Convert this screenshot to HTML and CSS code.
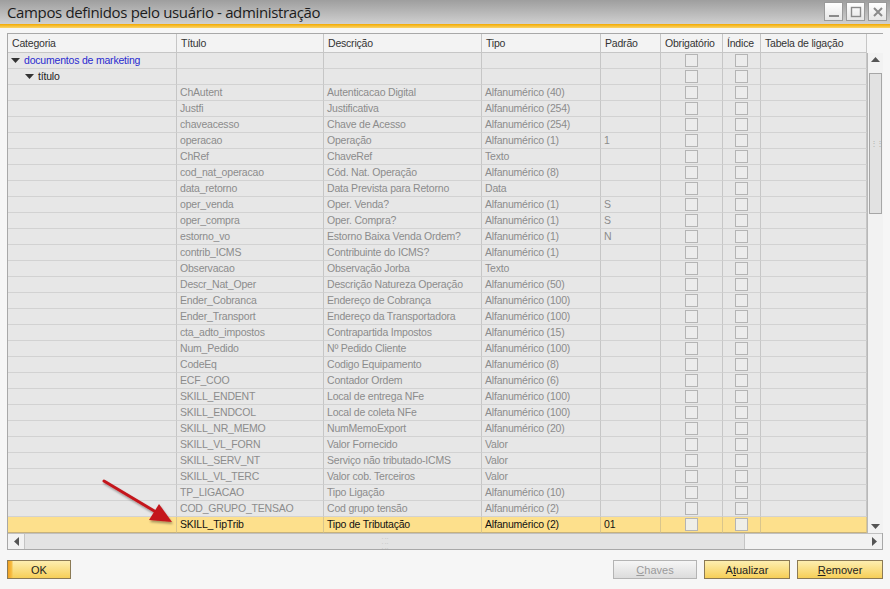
FILE: index.html
```html
<!DOCTYPE html>
<html lang="pt">
<head>
<meta charset="utf-8">
<title>Campos definidos pelo usuário - administração</title>
<link rel="stylesheet" href="styles.css">
</head>
<body>
<div class="window">
  <div class="titlebar">
    <span class="title">Campos definidos pelo usuário - administração</span>
    <div class="winbtns">
      <span class="wb"><svg width="12" height="12" viewBox="0 0 12 12"><rect x="1" y="9" width="10" height="2" fill="#8a8a8a"/></svg></span>
      <span class="wb"><svg width="12" height="12" viewBox="0 0 12 12"><rect x="1.5" y="1.5" width="9" height="9" fill="none" stroke="#8a8a8a" stroke-width="1.4"/></svg></span>
      <span class="wb"><svg width="12" height="12" viewBox="0 0 12 12"><path d="M2 2 L10 10 M10 2 L2 10" stroke="#8a8a8a" stroke-width="2"/></svg></span>
    </div>
  </div>
  <div class="accent"></div>

  <div class="content">
    <div class="panel">
      <div class="main">
        <div class="grid">
          <div class="row head">
            <div class="c">Categoria</div><div class="c">Título</div><div class="c">Descrição</div><div class="c">Tipo</div><div class="c">Padrão</div><div class="c">Obrigatório</div><div class="c">Índice</div><div class="c">Tabela de ligação</div>
          </div>
          <div class="row cat">
            <div class="c l1"><svg class="tri" width="9" height="5" viewBox="0 0 9 5"><path d="M0 0 L9 0 L4.5 5Z" fill="#333"/></svg><span class="blue">documentos de marketing</span></div><div class="c"></div><div class="c"></div><div class="c"></div><div class="c"></div><div class="c cb"><i></i></div><div class="c cb"><i></i></div><div class="c"></div>
          </div>
          <div class="row cat">
            <div class="c l2"><svg class="tri" width="9" height="5" viewBox="0 0 9 5"><path d="M0 0 L9 0 L4.5 5Z" fill="#333"/></svg><span>título</span></div><div class="c"></div><div class="c"></div><div class="c"></div><div class="c"></div><div class="c cb"><i></i></div><div class="c cb"><i></i></div><div class="c"></div>
          </div>
          <div class="row"><div class="c"></div><div class="c">ChAutent</div><div class="c">Autenticacao Digital</div><div class="c">Alfanumérico (40)</div><div class="c"></div><div class="c cb"><i></i></div><div class="c cb"><i></i></div><div class="c"></div></div>
          <div class="row"><div class="c"></div><div class="c">Justfi</div><div class="c">Justificativa</div><div class="c">Alfanumérico (254)</div><div class="c"></div><div class="c cb"><i></i></div><div class="c cb"><i></i></div><div class="c"></div></div>
          <div class="row"><div class="c"></div><div class="c">chaveacesso</div><div class="c">Chave de Acesso</div><div class="c">Alfanumérico (254)</div><div class="c"></div><div class="c cb"><i></i></div><div class="c cb"><i></i></div><div class="c"></div></div>
          <div class="row"><div class="c"></div><div class="c">operacao</div><div class="c">Operação</div><div class="c">Alfanumérico (1)</div><div class="c">1</div><div class="c cb"><i></i></div><div class="c cb"><i></i></div><div class="c"></div></div>
          <div class="row"><div class="c"></div><div class="c">ChRef</div><div class="c">ChaveRef</div><div class="c">Texto</div><div class="c"></div><div class="c cb"><i></i></div><div class="c cb"><i></i></div><div class="c"></div></div>
          <div class="row"><div class="c"></div><div class="c">cod_nat_operacao</div><div class="c">Cód. Nat. Operação</div><div class="c">Alfanumérico (8)</div><div class="c"></div><div class="c cb"><i></i></div><div class="c cb"><i></i></div><div class="c"></div></div>
          <div class="row"><div class="c"></div><div class="c">data_retorno</div><div class="c">Data Prevista para Retorno</div><div class="c">Data</div><div class="c"></div><div class="c cb"><i></i></div><div class="c cb"><i></i></div><div class="c"></div></div>
          <div class="row"><div class="c"></div><div class="c">oper_venda</div><div class="c">Oper. Venda?</div><div class="c">Alfanumérico (1)</div><div class="c">S</div><div class="c cb"><i></i></div><div class="c cb"><i></i></div><div class="c"></div></div>
          <div class="row"><div class="c"></div><div class="c">oper_compra</div><div class="c">Oper. Compra?</div><div class="c">Alfanumérico (1)</div><div class="c">S</div><div class="c cb"><i></i></div><div class="c cb"><i></i></div><div class="c"></div></div>
          <div class="row"><div class="c"></div><div class="c">estorno_vo</div><div class="c">Estorno Baixa Venda Ordem?</div><div class="c">Alfanumérico (1)</div><div class="c">N</div><div class="c cb"><i></i></div><div class="c cb"><i></i></div><div class="c"></div></div>
          <div class="row"><div class="c"></div><div class="c">contrib_ICMS</div><div class="c">Contribuinte do ICMS?</div><div class="c">Alfanumérico (1)</div><div class="c"></div><div class="c cb"><i></i></div><div class="c cb"><i></i></div><div class="c"></div></div>
          <div class="row"><div class="c"></div><div class="c">Observacao</div><div class="c">Observação Jorba</div><div class="c">Texto</div><div class="c"></div><div class="c cb"><i></i></div><div class="c cb"><i></i></div><div class="c"></div></div>
          <div class="row"><div class="c"></div><div class="c">Descr_Nat_Oper</div><div class="c">Descrição Natureza Operação</div><div class="c">Alfanumérico (50)</div><div class="c"></div><div class="c cb"><i></i></div><div class="c cb"><i></i></div><div class="c"></div></div>
          <div class="row"><div class="c"></div><div class="c">Ender_Cobranca</div><div class="c">Endereço de Cobrança</div><div class="c">Alfanumérico (100)</div><div class="c"></div><div class="c cb"><i></i></div><div class="c cb"><i></i></div><div class="c"></div></div>
          <div class="row"><div class="c"></div><div class="c">Ender_Transport</div><div class="c">Endereço da Transportadora</div><div class="c">Alfanumérico (100)</div><div class="c"></div><div class="c cb"><i></i></div><div class="c cb"><i></i></div><div class="c"></div></div>
          <div class="row"><div class="c"></div><div class="c">cta_adto_impostos</div><div class="c">Contrapartida Impostos</div><div class="c">Alfanumérico (15)</div><div class="c"></div><div class="c cb"><i></i></div><div class="c cb"><i></i></div><div class="c"></div></div>
          <div class="row"><div class="c"></div><div class="c">Num_Pedido</div><div class="c">Nº Pedido Cliente</div><div class="c">Alfanumérico (100)</div><div class="c"></div><div class="c cb"><i></i></div><div class="c cb"><i></i></div><div class="c"></div></div>
          <div class="row"><div class="c"></div><div class="c">CodeEq</div><div class="c">Codigo Equipamento</div><div class="c">Alfanumérico (8)</div><div class="c"></div><div class="c cb"><i></i></div><div class="c cb"><i></i></div><div class="c"></div></div>
          <div class="row"><div class="c"></div><div class="c">ECF_COO</div><div class="c">Contador Ordem</div><div class="c">Alfanumérico (6)</div><div class="c"></div><div class="c cb"><i></i></div><div class="c cb"><i></i></div><div class="c"></div></div>
          <div class="row"><div class="c"></div><div class="c">SKILL_ENDENT</div><div class="c">Local de entrega NFe</div><div class="c">Alfanumérico (100)</div><div class="c"></div><div class="c cb"><i></i></div><div class="c cb"><i></i></div><div class="c"></div></div>
          <div class="row"><div class="c"></div><div class="c">SKILL_ENDCOL</div><div class="c">Local de coleta NFe</div><div class="c">Alfanumérico (100)</div><div class="c"></div><div class="c cb"><i></i></div><div class="c cb"><i></i></div><div class="c"></div></div>
          <div class="row"><div class="c"></div><div class="c">SKILL_NR_MEMO</div><div class="c">NumMemoExport</div><div class="c">Alfanumérico (20)</div><div class="c"></div><div class="c cb"><i></i></div><div class="c cb"><i></i></div><div class="c"></div></div>
          <div class="row"><div class="c"></div><div class="c">SKILL_VL_FORN</div><div class="c">Valor Fornecido</div><div class="c">Valor</div><div class="c"></div><div class="c cb"><i></i></div><div class="c cb"><i></i></div><div class="c"></div></div>
          <div class="row"><div class="c"></div><div class="c">SKILL_SERV_NT</div><div class="c">Serviço não tributado-ICMS</div><div class="c">Valor</div><div class="c"></div><div class="c cb"><i></i></div><div class="c cb"><i></i></div><div class="c"></div></div>
          <div class="row"><div class="c"></div><div class="c">SKILL_VL_TERC</div><div class="c">Valor cob. Terceiros</div><div class="c">Valor</div><div class="c"></div><div class="c cb"><i></i></div><div class="c cb"><i></i></div><div class="c"></div></div>
          <div class="row"><div class="c"></div><div class="c">TP_LIGACAO</div><div class="c">Tipo Ligação</div><div class="c">Alfanumérico (10)</div><div class="c"></div><div class="c cb"><i></i></div><div class="c cb"><i></i></div><div class="c"></div></div>
          <div class="row"><div class="c"></div><div class="c">COD_GRUPO_TENSAO</div><div class="c">Cod grupo tensão</div><div class="c">Alfanumérico (2)</div><div class="c"></div><div class="c cb"><i></i></div><div class="c cb"><i></i></div><div class="c"></div></div>
          <div class="row sel"><div class="c"></div><div class="c">SKILL_TipTrib</div><div class="c">Tipo de Tributação</div><div class="c">Alfanumérico (2)</div><div class="c">01</div><div class="c cb"><i></i></div><div class="c cb"><i></i></div><div class="c"></div></div>
        </div>
        <div class="vcol">
          <div class="vhead"></div>
          <div class="vscroll">
            <div class="arr"><svg width="9" height="5" viewBox="0 0 9 5"><path d="M0 5 L4.5 0 L9 5Z" fill="#555"/></svg></div>
            <div class="vthumb"><span class="grip">&#8942;&#8942;</span></div>
            <div class="vspace"></div>
            <div class="arr"><svg width="9" height="5" viewBox="0 0 9 5"><path d="M0 0 L4.5 5 L9 0Z" fill="#555"/></svg></div>
          </div>
        </div>
      </div>
      <div class="hscroll">
        <div class="harr"><svg width="5" height="9" viewBox="0 0 5 9"><path d="M5 0 L0 4.5 L5 9Z" fill="#555"/></svg></div>
        <div class="hthumb"><span class="hgrip">&#8942;&#8942;&#8942;</span></div>
        <div class="hspace"></div>
        <div class="harr"><svg width="5" height="9" viewBox="0 0 5 9"><path d="M0 0 L5 4.5 L0 9Z" fill="#555"/></svg></div>
      </div>
    </div>

    <div class="buttons">
      <button class="btn ok">OK</button>
      <div class="right">
        <button class="btn gray"><u>C</u>haves</button>
        <button class="btn">A<u>t</u>ualizar</button>
        <button class="btn"><u>R</u>emover</button>
      </div>
    </div>
  </div>

  <svg class="pointer" width="100" height="60" viewBox="0 0 100 60">
    <defs>
      <filter id="sh" x="-20%" y="-20%" width="140%" height="140%">
        <feDropShadow dx="1" dy="2" stdDeviation="1.2" flood-color="#000" flood-opacity="0.35"/>
      </filter>
    </defs>
    <g filter="url(#sh)">
      <path d="M3 2 L55 33" stroke="#c4161c" stroke-width="3" stroke-linecap="round"/>
      <path d="M71 43 L48 41 L58 25 Z" fill="#c4161c"/>
    </g>
  </svg>
</div>
</body>
</html>
```

FILE: styles.css
```css
* { box-sizing: border-box; }
html, body { margin: 0; padding: 0; }
body {
  width: 890px;
  height: 589px;
  overflow: hidden;
  background: #f6f6f6;
  font-family: "Liberation Sans", Arial, sans-serif;
  font-size: 10.5px;
  letter-spacing: -0.2px;
  color: #222;
}
.window { position: relative; width: 890px; height: 589px; display: flex; flex-direction: column; }

.titlebar {
  height: 24px;
  background: linear-gradient(#9e9e9e, #d0d0d0);
  display: flex;
  align-items: center;
  justify-content: space-between;
  padding: 0 3px 0 7px;
}
.title {
  font-family: "Open Sans", "Liberation Sans", sans-serif;
  font-size: 15px;
  letter-spacing: -0.35px;
  color: #1c1c1c;
  line-height: 24px;
}
.winbtns { display: flex; gap: 3px; align-self: flex-start; padding-top: 2px; }
.wb {
  width: 19px; height: 19px;
  border: 1px solid #9a9a9a;
  background: linear-gradient(#ffffff, #e6e6e6);
  display: flex; align-items: center; justify-content: center;
}
.accent { height: 4px; background: linear-gradient(#f2a900, #fbd56a); }

.content { flex: 1; padding: 5px 7px 0 7px; display: flex; flex-direction: column; }

.panel {
  width: 876px;
  border: 1px solid #a8a8a8;
  background: #f4f4f4;
}
.main { display: flex; }
.grid { width: 859px; }
.row {
  display: grid;
  grid-template-columns: 169px 147px 158px 119px 60px 62px 38px 106px;
  height: 16px;
  background: #e7e7e7;
  color: #8c8c8c;
}
.row .c {
  border-right: 1px solid #c6c6c6;
  border-bottom: 1px solid #d2d2d2;
  padding-left: 3px;
  line-height: 15px;
  white-space: nowrap;
  overflow: hidden;
}
.row.head {
  height: 19px;
  background: #f3f3f3;
  color: #333;
}
.row.head .c { line-height: 18px; border-bottom: 1px solid #c6c6c6; padding-left: 4px; }
.row.cat { color: #222; }
.c.l1 { padding-left: 3px; display: flex; align-items: center; }
.c.l2 { padding-left: 17px; display: flex; align-items: center; }
.tri { flex: none; margin-right: 4px; }
.blue { color: #2a2ad0; }
.row.sel { background: #fde08c; color: #111; }
.row.sel .c { border-right-color: #d9c58c; border-bottom-color: #c8b27a; }

.row .c.cb { display: flex; align-items: center; justify-content: center; padding-left: 0; }
.cb i {
  display: block;
  width: 13px; height: 13px;
  border: 1px solid #b4b4b4;
  background: #ececec;
}
.row.sel .cb i { background: #efefe8; }

.vcol { width: 16px; display: flex; flex-direction: column; }
.vhead { height: 19px; background: #f6f6f6; }
.vscroll {
  height: 480px;
  background: #f2f2f2;
  border-left: 1px solid #b8b8b8;
  display: flex; flex-direction: column;
}
.arr { height: 13px; display: flex; align-items: center; justify-content: center; }
.vthumb {
  margin: 7px 1px 0 1px;
  height: 141px;
  border: 1px solid #a6a6a6;
  background: #e2e2e2;
  display: flex; align-items: center; justify-content: center;
}
.grip { font-size: 8px; color: #b0b0b0; letter-spacing: -2px; }
.vspace { flex: 1; }

.hscroll {
  height: 16px;
  display: flex;
  align-items: center;
  background: #f2f2f2;
  border-top: 1px solid #c0c0c0;
}
.harr { width: 16px; height: 15px; display: flex; align-items: center; justify-content: center; }
.hthumb {
  width: 721px;
  height: 15px;
  border-left: 1px solid #c4c4c4;
  border-right: 1px solid #c4c4c4;
  background: #e3e3e3;
  display: flex; align-items: center; justify-content: center;
}
.hgrip { font-size: 7px; color: #c0c0c0; letter-spacing: -2px; transform: rotate(90deg); }
.hspace { flex: 1; }

.buttons {
  margin-top: 10px;
  width: 876px;
  display: flex;
  justify-content: space-between;
}
.right { display: flex; gap: 7px; }
.btn {
  font-family: "Liberation Sans", Arial, sans-serif;
  font-size: 11px;
  color: #222;
  height: 19px;
  width: 86px;
  padding: 0;
  border: 1px solid #8b7a55;
  background: linear-gradient(#fdeeb0, #f6cf58);
}
.btn.ok {
  width: 64px;
  background: linear-gradient(90deg, #f0a020 0, #f7c24a 4px, transparent 5px), linear-gradient(#fdeeb0, #f6cf58);
}
.btn.gray {
  width: 84px;
  color: #9a9a9a;
  border-color: #b4b4b4;
  background: linear-gradient(#f6f6f6, #dcdcdc);
}

.pointer { position: absolute; left: 101px; top: 479px; }
```
